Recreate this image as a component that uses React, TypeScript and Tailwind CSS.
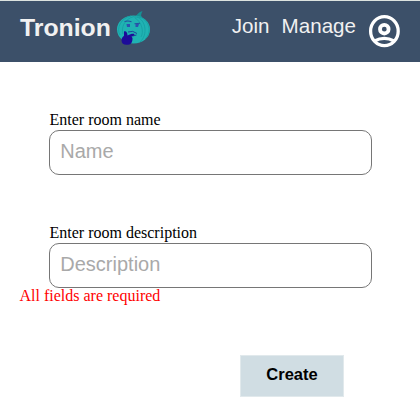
import React from "react";

function PumpkinLogo() {
  return (
    <svg className="mt-[10px] ml-[6px] h-[35px] w-[36px] shrink-0" viewBox="0 0 36 35">
      <path d="M17 7C21 5.500 21 1.500 26.500 0 C25 3 24.500 5 26 7L23 8Z" fill="#159295" />
      <ellipse cx="17.500" cy="18.500" rx="16.500" ry="14" fill="#20b2b3" />
      <g fill="none" stroke="#159da1" strokeWidth=".8">
        <path d="M15 5C5 7 0 17 4 24M18 5.500C8 8 5 17 7 23M21 6c9 3 11 18 3 25M23 6c11 3 13 16 6 22M19 7c7 4 9 14 6 19M18 6h8" />
      </g>
      <path d="M8.500 10.500Q12 9.500 15.500 10.700M18.500 12.700L24 12.200" fill="none" stroke="#254f9f" strokeWidth="1.100" />
      <path d="M10.500 13h3.500v3h-3zM19.500 13h3.500l-1 3h-2.500z" fill="#2b53b0" />
      <path d="M12 21q5-2 9 1.500M13.500 24.500q4 1 7-.5" fill="none" stroke="#1d479b" strokeWidth="1" />
      <path d="M8 20.500c2-1 3.500 1 3.500 4 3-1.500 5-2 7-1.500l-.5 1.500-2.500 1 1 1.500c0 4-1 6.500-4.500 6.700-4 .5-6.500-1-6.500-4.500 0-2 1-3 2.500-4.500z" fill="#1d0c99" />
    </svg>
  );
}

function AccountIcon() {
  return (
    <svg className="mt-[13px] ml-3 h-[34px] w-[33px] shrink-0" viewBox="0 0 33 34" fill="none" stroke="white">
      <ellipse cx="16.400" cy="17.200" rx="13.800" ry="14.500" strokeWidth="3.300" />
      <circle cx="16.300" cy="15.200" r="4.300" strokeWidth="3.800" />
      <path d="M6.500 27Q16.300 21.700 26.100 27" strokeWidth="3.200" />
    </svg>
  );
}

function Field({ label, placeholder }: { label: string; placeholder: string }) {
  return (
    <label className="ml-[49px] block w-[323px]">
      <span className="block h-[19px] pl-[0.5px] text-base leading-[18px]">{label}</span>
      <input
        placeholder={placeholder}
        className="block h-[45px] w-full rounded-[10px] border border-[#767676] bg-white px-[10.3px] pb-[2px] font-['Liberation_Sans',sans-serif] text-[20px] text-black outline-none placeholder:text-[#a9a9a9]"
      />
    </label>
  );
}

export default function App() {
  return (
    <div className="h-[410px] w-[420px] overflow-hidden bg-white font-['Liberation_Serif',serif] text-black">
      <header className="flex h-[62px] items-start border-t border-[#dce3df] bg-[#3c5069] pr-[19px] pl-5 font-['Liberation_Sans',sans-serif] text-[#f1f1f1]">
        <h1 className="mt-3 w-[90px] text-[24.800px] leading-[29px] font-bold">Tronion</h1>
        <PumpkinLogo />
        <nav className="mt-[13px] ml-auto flex gap-3 text-[20.600px] leading-6">
          <a>Join</a>
          <a>Manage</a>
        </nav>
        <AccountIcon />
      </header>
      <main className="pt-[49px]">
        <Field label="Enter room name" placeholder="Name" />
        <div className="mt-[49px]">
          <Field label="Enter room description" placeholder="Description" />
        </div>
        <p className="ml-[19.5px] h-[18px] text-base leading-[16px] text-[#ff0000]">All fields are required</p>
        <button className="mt-[49px] ml-[240px] block h-[42px] w-[104px] border border-[#e1e9ec] bg-[#d0dde3] pb-[3px] font-['Liberation_Sans',sans-serif] text-[16.500px] font-bold">
          Create
        </button>
      </main>
    </div>
  );
}
